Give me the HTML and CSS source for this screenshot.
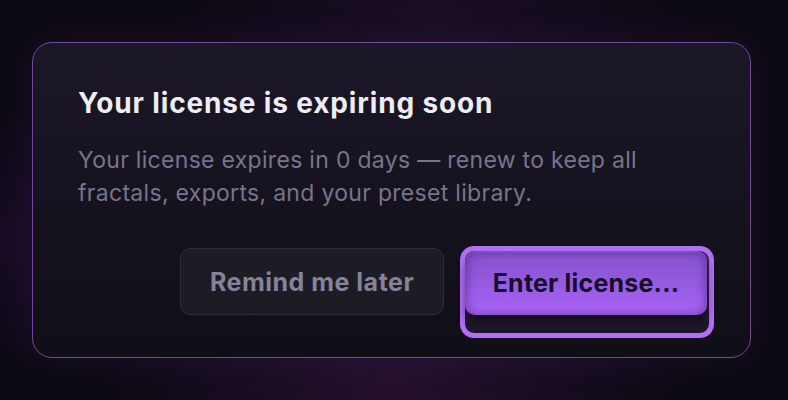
FILE: index.html
```html
<!DOCTYPE html>
<html lang="en">
<head>
  <meta charset="UTF-8">
  <title>License expiring</title>
  <link rel="stylesheet" href="styles.css">
</head>
<body>

  <div class="dialog">
    <h2>Your license is expiring soon</h2>
    <p>Your license expires in 0 days — renew to keep all fractals, exports, and your preset library.</p>

    <div class="actions">
      <button class="later">Remind me later</button>
      <span class="focus-ring">
        <button class="enter">Enter license...</button>
      </span>
    </div>
  </div>

</body>
</html>
```

FILE: styles.css
```css
body {
  margin: 0;
  height: 400px;
  overflow: hidden;
  font-family: Inter, "Noto Sans", sans-serif;
  background-color: #0c0a12;
  background-image:
    radial-gradient(ellipse at 50% 100%, rgba(90, 30, 110, 0.3), transparent 55%),
    radial-gradient(ellipse at 55% 0%, rgba(70, 25, 90, 0.25), transparent 45%),
    radial-gradient(ellipse at 0% 60%, rgba(60, 20, 90, 0.25), transparent 40%);
  display: flex;
  align-items: center;
}

.dialog {
  margin-left: 32px;
  width: 719px;
  height: 316px;
  box-sizing: border-box;
  padding: 42px 36px 0 45px;
  border: 1.5px solid #74479f;
  border-radius: 20px;
  background: linear-gradient(#1b1727, #100e17);
  box-shadow: 0 0 40px rgba(110, 50, 170, 0.15);
}

h2 {
  margin: 0;
  color: #eeecf4;
  font-size: 28px;
  font-weight: 700;
  line-height: 36px;
  letter-spacing: 0.85px;
}

p {
  margin: 23px 0 0;
  color: #78748b;
  font-size: 23px;
  line-height: 33px;
  letter-spacing: 0.3px;
  max-width: 600px;
}

.actions {
  margin-top: 36px;
  display: flex;
  justify-content: flex-end;
  align-items: flex-start;
  gap: 16px;
}

button {
  font-family: inherit;
  font-size: 25px;
  font-weight: 700;
  letter-spacing: 0.2px;
  border-radius: 10px;
  cursor: pointer;
}

.later {
  margin-top: 2px;
  width: 264px;
  height: 67px;
  background-color: #1d1c25;
  border: 1px solid #2c2b36;
  color: #85829a;
  letter-spacing: 0.5px;
}

.focus-ring {
  display: block;
  padding: 0 2px 18px 0;
  border: 5px solid #b46ef6;
  border-radius: 14px;
  background: linear-gradient(#3a2a52, #1c1628);
}

.enter {
  display: block;
  width: 242px;
  height: 64px;
  border: none;
  color: #170d29;
  background: linear-gradient(#8450cc, #a865f6);
  box-shadow:
    inset 0 2px 0 rgba(255, 255, 255, 0.08),
    inset 4px 0 8px rgba(60, 20, 110, 0.3),
    inset -4px 0 8px rgba(60, 20, 110, 0.3),
    0 8px 10px rgba(0, 0, 0, 0.45);
}
```
